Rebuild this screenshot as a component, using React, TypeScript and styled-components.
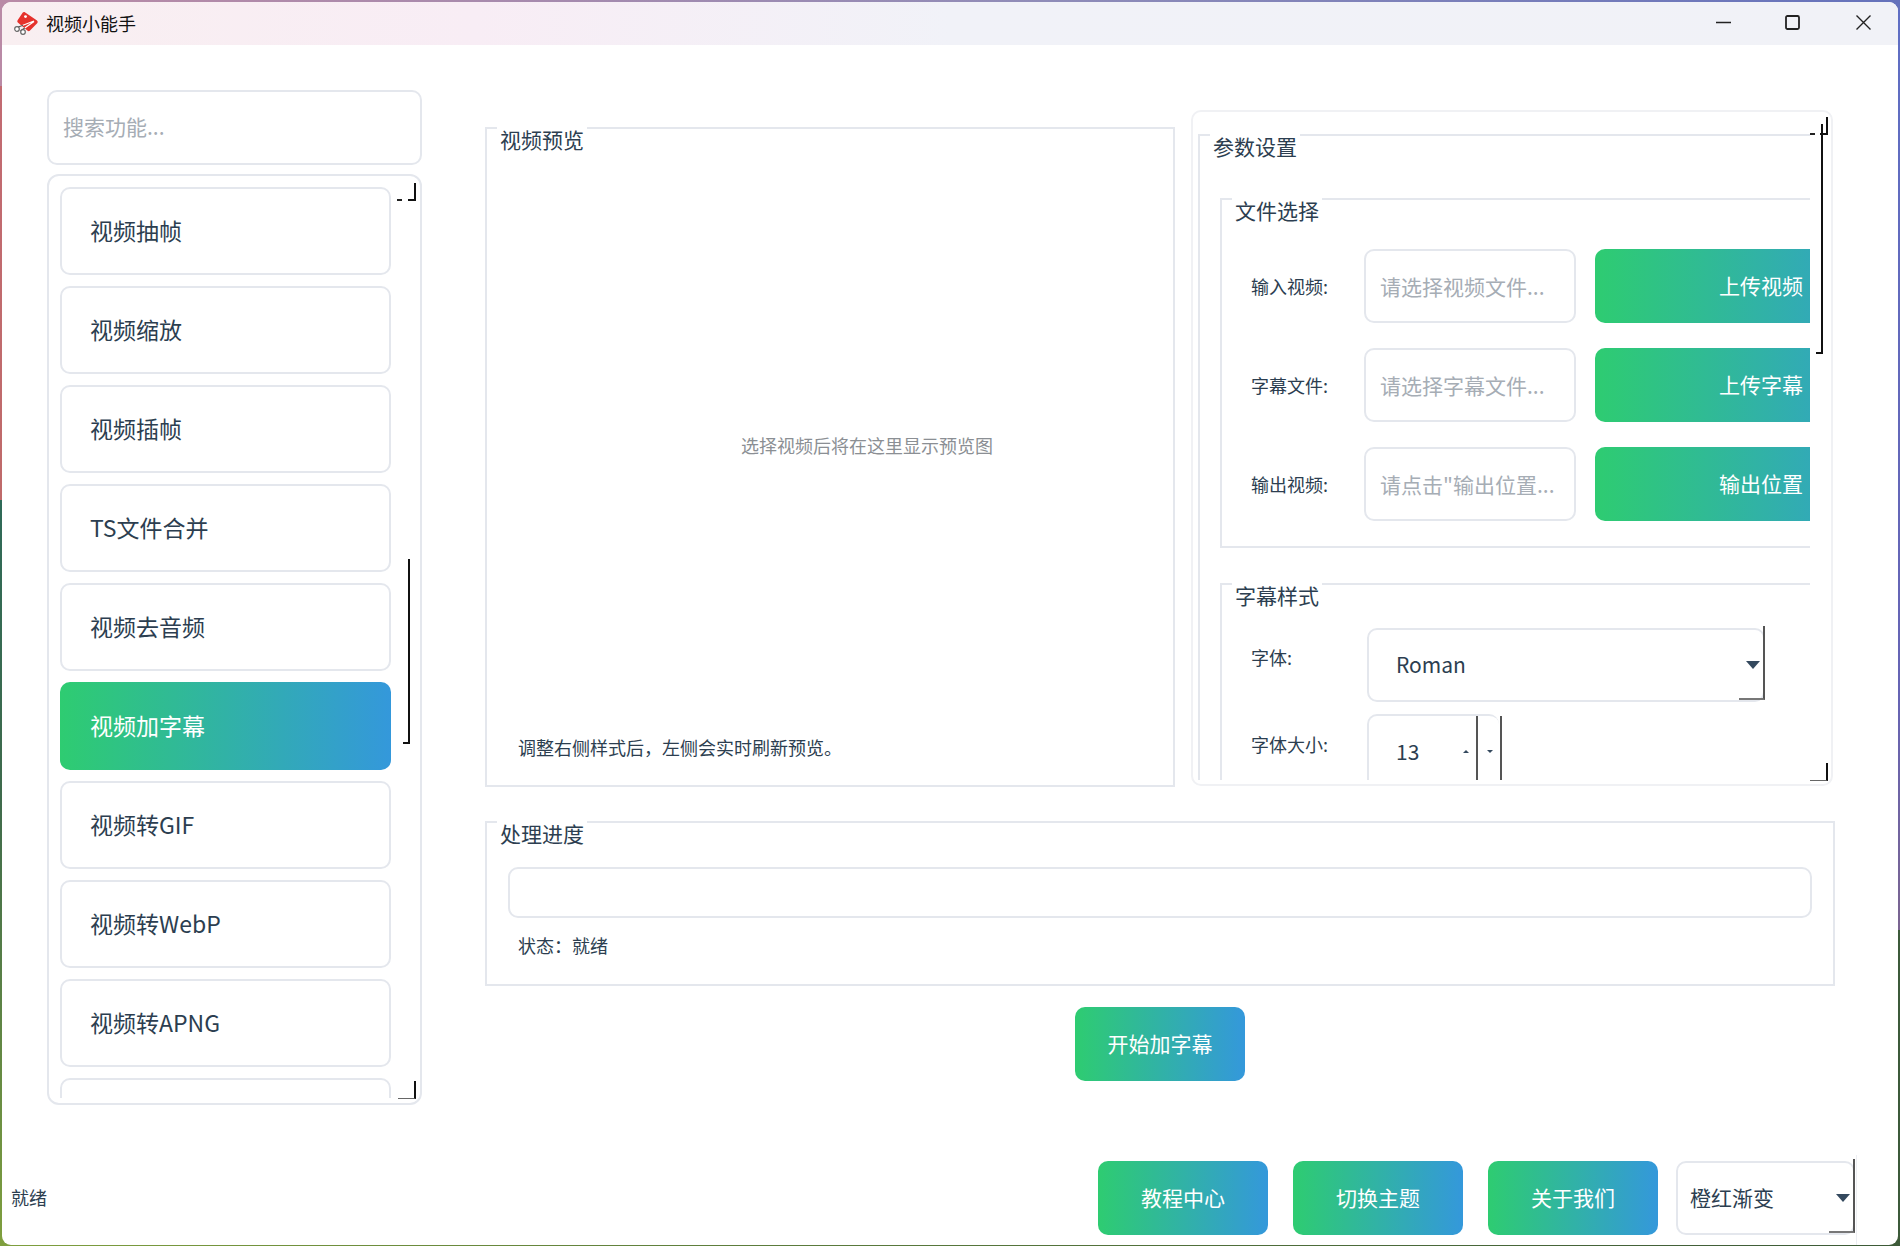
import React from 'react';
import styled, { createGlobalStyle, css } from 'styled-components';

const font = `"Noto Sans CJK SC", "Noto Sans", sans-serif`;
const gradient = 'linear-gradient(90deg, #2ecc71 0%, #3498db 100%)';
const line = '#e4e7ed';
const ink = '#2c3e50';

const GlobalStyle = createGlobalStyle`
  html, body {
    margin: 0;
    padding: 0;
    width: 1900px;
    height: 1246px;
    overflow: hidden;
    font-family: ${font};
  }
  * {
    box-sizing: border-box;
  }
`;

/* the desktop only shows as a thin rim round the window */
const Desktop = styled.div`
  width: 1900px;
  height: 1246px;
  padding: 2px 2px 1px 2px;
  background-color: #6a6ab0;
  background-image:
    linear-gradient(90deg, #b98aa6 0%, #a58aae 30%, #8f8cb8 55%, #6572bb 100%),
    linear-gradient(90deg, #7f9f3e 0%, #5c7c3c 40%, #3d5a38 100%),
    linear-gradient(180deg, #b98aa6 0, #b98aa6 86px, #c26b72 86px, #bf6a6a 500px, #2f6a58 500px, #3f6b4c 800px, #7f9f3e 100%),
    linear-gradient(180deg, #5f6fc4 0, #6664b4 700px, #7a6490 930px, #3c5a3a 930px, #3c5a3a 100%);
  background-repeat: no-repeat;
  background-size: 100% 10px, 100% 10px, 10px 100%, 10px 100%;
  background-position: top left, bottom left, top left, top right;
`;

const Window = styled.div`
  width: 1896px;
  height: 1243px;
  background: #fff;
  border-radius: 9px;
  overflow: hidden;
  display: flex;
  flex-direction: column;
`;

const TitleBar = styled.header`
  height: 43px;
  display: flex;
  align-items: center;
  padding: 0 27px 2px 11px;
  background: linear-gradient(90deg, #f9eff1 0%, #f8edf5 25%, #f1f2f8 50%, #f1f2f7 100%);
`;

const TitleText = styled.span`
  margin-left: 7px;
  font-size: 18px;
  color: #111;
  flex: 1;
`;

const WindowControls = styled.div`
  display: flex;
  align-items: center;
  gap: 54px;
  svg {
    display: block;
  }
  svg:last-child {
    margin-left: 2px;
  }
`;

const Content = styled.div`
  height: 1060px;
  display: flex;
  padding: 45px 0 0 45px;
`;

const Sidebar = styled.aside`
  width: 375px;
  display: flex;
  flex-direction: column;
  gap: 9px;
`;

const SearchInput = styled.input`
  flex: none;
  height: 75px;
  width: 100%;
  padding: 0 14px 4px;
  border: 2px solid ${line};
  border-radius: 10px;
  outline: none;
  background: #fff;
  font-family: ${font};
  font-size: 21px;
  color: ${ink};
  &::placeholder {
    color: #a6adb5;
    opacity: 1;
  }
`;

const ListFrame = styled.div`
  position: relative;
  height: 931px;
  border: 2px solid ${line};
  border-radius: 12px;
`;

const ListViewport = styled.div`
  width: 344px;
  height: 922px;
  padding: 11px 0 0 11px;
  overflow: hidden;
  display: flex;
  flex-direction: column;
  gap: 11px;
`;

const ListItem = styled.div<{ $active?: boolean }>`
  flex: none;
  width: 331px;
  height: 88px;
  display: flex;
  align-items: center;
  padding-left: 28px;
  padding-bottom: 2px;
  border: 2px solid ${line};
  border-radius: 10px;
  font-size: 23px;
  color: ${ink};
  ${p =>
    p.$active &&
    css`
      background: ${gradient} border-box;
      border-color: transparent;
      color: #fff;
    `}
`;

/* leftover scrollbar strokes, drawn as L pieces above the content */
const ScrollMark = styled.span<{ $x: number; $y: number; $w: number; $h: number; $light?: boolean }>`
  position: absolute;
  left: ${p => p.$x}px;
  top: ${p => p.$y}px;
  width: ${p => p.$w}px;
  height: ${p => p.$h}px;
  border-right: 2px solid #111;
  border-bottom: ${p => (p.$light ? '1px solid #666' : '2px solid #111')};
`;

const ScrollDash = styled.span<{ $x: number; $y: number }>`
  position: absolute;
  left: ${p => p.$x}px;
  top: ${p => p.$y}px;
  width: 5px;
  height: 2px;
  background: #222;
`;

const Main = styled.main`
  margin: 20px 0 0 63px;
  width: 1350px;
  display: flex;
  flex-direction: column;
`;

const TopRow = styled.div`
  display: flex;
  align-items: flex-start;
  gap: 16px;
  height: 676px;
`;

const GroupBox = styled.section`
  border: 2px solid ${line};
  display: flex;
  flex-direction: column;
`;

const GroupTitle = styled.div`
  align-self: flex-start;
  margin: -2px 0 0 10px;
  padding: 0 3px 3px;
  height: 28px;
  line-height: 25px;
  background: #fff;
  font-size: 21px;
  color: ${ink};
`;

const PreviewBox = styled(GroupBox)`
  flex: none;
  margin-top: 17px;
  width: 690px;
  height: 660px;
`;

const PreviewHint = styled.div`
  margin-top: 276px;
  padding-left: 74px;
  text-align: center;
  line-height: 28px;
  font-size: 18px;
  color: #8b8f94;
`;

const SmallNote = styled.div`
  margin-left: 31px;
  line-height: 28px;
  font-size: 18px;
  color: ${ink};
`;

const PreviewNote = styled(SmallNote)`
  margin-top: auto;
  padding-bottom: 24px;
`;

const ParamsFrame = styled.div`
  position: relative;
  flex: none;
  width: 642px;
  height: 676px;
  padding: 6px 21px 4px 5px;
  border: 2px solid #f0f1f4;
  border-radius: 10px;
`;

const ParamsViewport = styled.div`
  height: 662px;
  overflow: hidden;
`;

const ParamsBox = styled(GroupBox)`
  margin-top: 16px;
  width: 760px;
  height: 900px;
`;

const SubBox = styled(GroupBox)<{ $top: number; $height: number }>`
  flex: none;
  margin: ${p => p.$top}px 0 0 20px;
  width: 720px;
  height: ${p => p.$height}px;
`;

const FileRows = styled.div`
  margin-top: 23px;
  display: flex;
  flex-direction: column;
  gap: 25px;
`;

const FormRow = styled.div`
  display: flex;
  align-items: center;
  height: 74px;
  padding-left: 29px;
`;

const RowLabel = styled.label<{ $width: number; $lift?: number }>`
  flex: none;
  width: ${p => p.$width}px;
  padding-bottom: ${p => p.$lift ?? 0}px;
  font-size: 18px;
  color: ${ink};
`;

const PathInput = styled(SearchInput)`
  width: 212px;
  height: 74px;
  padding-bottom: 0;
`;

const GradientButton = styled.button`
  flex: none;
  width: 170px;
  height: 74px;
  border: none;
  border-radius: 10px;
  background: ${gradient};
  color: #fff;
  font-family: ${font};
  font-size: 21px;
  padding: 0 0 2px;
`;

const WideButton = styled(GradientButton)`
  margin-left: 19px;
  width: 332px;
`;

const StyleRows = styled.div`
  margin-top: 17px;
  display: flex;
  flex-direction: column;
  gap: 12px;
`;

const SelectBox = styled.div<{ $width: number; $pad: number }>`
  position: relative;
  flex: none;
  width: ${p => p.$width}px;
  height: 74px;
  display: flex;
  align-items: center;
  padding: 0 0 2px ${p => p.$pad}px;
  border: 2px solid ${line};
  border-radius: 10px;
  font-size: 21px;
  color: ${ink};
  &::before {
    content: '';
    position: absolute;
    right: 3px;
    top: 31px;
    border-left: 7px solid transparent;
    border-right: 7px solid transparent;
    border-top: 8px solid #34495e;
  }
  &::after {
    content: '';
    position: absolute;
    right: -2px;
    bottom: 0;
    width: 24px;
    height: 72px;
    border-right: 2px solid #555;
    border-bottom: 2px solid #777;
  }
`;

const SpinBox = styled.div`
  position: relative;
  flex: none;
  width: 132px;
  height: 74px;
  display: flex;
  align-items: center;
  padding: 0 0 2px 27px;
  border: 2px solid ${line};
  border-bottom: none;
  border-right: none;
  border-radius: 10px 10px 0 0;
  font-size: 21px;
  color: ${ink};
`;

const SpinLine = styled.span<{ $x: number }>`
  position: absolute;
  left: ${p => p.$x}px;
  top: 0;
  bottom: -2px;
  width: 2px;
  background: #555;
`;

const SpinArrow = styled.span<{ $x: number; $down?: boolean }>`
  position: absolute;
  left: ${p => p.$x}px;
  top: 34px;
  border-left: 3px solid transparent;
  border-right: 3px solid transparent;
  ${p => (p.$down ? 'border-top: 3px solid #34495e;' : 'border-bottom: 3px solid #34495e;')}
`;

const ProgressBox = styled(GroupBox)`
  margin-top: 35px;
  height: 165px;
`;

const ProgressTrack = styled.div`
  margin: 18px 0 0 21px;
  width: 1304px;
  height: 51px;
  border: 2px solid ${line};
  border-radius: 10px;
`;

const StatusNote = styled(SmallNote)`
  margin-top: 13px;
`;

const StartButton = styled(GradientButton)`
  margin-top: 21px;
  align-self: center;
`;

const Footer = styled.footer`
  margin-top: 56px;
  height: 74px;
  display: flex;
  align-items: center;
  padding: 0 43px 0 9px;
  gap: 25px;
`;

const ReadyText = styled.span`
  flex: 1;
  font-size: 18px;
  color: ${ink};
  padding-bottom: 3px;
`;

const ThemeSelect = styled(SelectBox)`
  margin-left: -7px;
`;

const FooterRule = styled.span`
  position: absolute;
  right: -4px;
  top: -8px;
  width: 1px;
  height: 90px;
  background: #eceef2;
`;

const AppIcon = () => (
  <svg width="26" height="24" viewBox="0 0 26 24">
    <path d="M11.5 1 L24 9.5 Q25.3 10.6 24.4 12 L17 19.5 Q16 20.6 14.6 19.8 L4.8 11.5 Q3.8 10.4 4.6 9.2 L9.6 1.8 Q10.4 0.6 11.5 1 Z" fill="#e5322d" />
    <circle cx="12.5" cy="5.6" r="1.4" fill="#fff" />
    <path d="M4 16.5 L21 10 M7.5 20 L21 10.5" stroke="#fff" strokeWidth="1.3" />
    <path d="M4 16.5 L10 14.2 M7.5 20 L12 16.8" stroke="#555" strokeWidth="1.1" />
    <circle cx="4" cy="18" r="2.3" fill="#fff" stroke="#666" strokeWidth="1.2" />
    <circle cx="10" cy="21" r="2.3" fill="#fff" stroke="#666" strokeWidth="1.2" />
  </svg>
);

const MinimizeIcon = () => (
  <svg width="15" height="15" viewBox="0 0 15 15">
    <path d="M0 7.5 H15" stroke="#222" strokeWidth="1.4" />
  </svg>
);

const MaximizeIcon = () => (
  <svg width="15" height="15" viewBox="0 0 15 15">
    <rect x="1" y="1" width="13" height="13" rx="1.5" fill="none" stroke="#222" strokeWidth="1.8" />
  </svg>
);

const CloseIcon = () => (
  <svg width="15" height="15" viewBox="0 0 15 15">
    <path d="M0.5 0.5 L14.5 14.5 M14.5 0.5 L0.5 14.5" stroke="#222" strokeWidth="1.4" />
  </svg>
);

const features = ['视频抽帧', '视频缩放', '视频插帧', 'TS文件合并', '视频去音频', '视频加字幕', '视频转GIF', '视频转WebP', '视频转APNG', ''];

const fileRows = [
  { label: '输入视频:', placeholder: '请选择视频文件...', action: '上传视频' },
  { label: '字幕文件:', placeholder: '请选择字幕文件...', action: '上传字幕' },
  { label: '输出视频:', placeholder: '请点击"输出位置...', action: '输出位置' },
];

const App = () => {
  return (
    <Desktop>
      <GlobalStyle />
      <Window>
        <TitleBar>
          <AppIcon />
          <TitleText>视频小能手</TitleText>
          <WindowControls>
            <MinimizeIcon />
            <MaximizeIcon />
            <CloseIcon />
          </WindowControls>
        </TitleBar>

        <Content>
          <Sidebar>
            <SearchInput placeholder="搜索功能..." readOnly />
            <ListFrame>
              <ListViewport>
                {features.map((name, i) => (
                  <ListItem key={i} $active={name === '视频加字幕'}>
                    {name}
                  </ListItem>
                ))}
              </ListViewport>
              <ScrollDash $x={348} $y={23} />
              <ScrollMark $x={359} $y={7} $w={8} $h={18} />
              <ScrollMark $x={354} $y={383} $w={7} $h={185} />
              <ScrollMark $x={349} $y={905} $w={18} $h={18} $light />
            </ListFrame>
          </Sidebar>

          <Main>
            <TopRow>
              <PreviewBox>
                <GroupTitle>视频预览</GroupTitle>
                <PreviewHint>选择视频后将在这里显示预览图</PreviewHint>
                <PreviewNote>调整右侧样式后，左侧会实时刷新预览。</PreviewNote>
              </PreviewBox>

              <ParamsFrame>
                <ParamsViewport>
                  <ParamsBox>
                    <GroupTitle>参数设置</GroupTitle>
                    <SubBox $top={36} $height={350}>
                      <GroupTitle>文件选择</GroupTitle>
                      <FileRows>
                        {fileRows.map(row => (
                          <FormRow key={row.action}>
                            <RowLabel $width={113}>{row.label}</RowLabel>
                            <PathInput placeholder={row.placeholder} readOnly />
                            <WideButton>{row.action}</WideButton>
                          </FormRow>
                        ))}
                      </FileRows>
                    </SubBox>
                    <SubBox $top={35} $height={300}>
                      <GroupTitle>字幕样式</GroupTitle>
                      <StyleRows>
                        <FormRow>
                          <RowLabel $width={116} $lift={16}>字体:</RowLabel>
                          <SelectBox $width={398} $pad={27}>Roman</SelectBox>
                        </FormRow>
                        <FormRow>
                          <RowLabel $width={116} $lift={14}>字体大小:</RowLabel>
                          <SpinBox>
                            13
                            <SpinLine $x={107} />
                            <SpinLine $x={131} />
                            <SpinArrow $x={94} />
                            <SpinArrow $x={118} $down />
                          </SpinBox>
                        </FormRow>
                      </StyleRows>
                    </SubBox>
                  </ParamsBox>
                </ParamsViewport>
                <ScrollDash $x={617} $y={21} />
                <ScrollMark $x={627} $y={5} $w={8} $h={18} />
                <ScrollMark $x={623} $y={12} $w={7} $h={230} />
                <ScrollMark $x={617} $y={651} $w={18} $h={18} $light />
              </ParamsFrame>
            </TopRow>

            <ProgressBox>
              <GroupTitle>处理进度</GroupTitle>
              <ProgressTrack />
              <StatusNote>状态：就绪</StatusNote>
            </ProgressBox>

            <StartButton>开始加字幕</StartButton>
          </Main>
        </Content>

        <Footer>
          <ReadyText>就绪</ReadyText>
          <GradientButton>教程中心</GradientButton>
          <GradientButton>切换主题</GradientButton>
          <GradientButton>关于我们</GradientButton>
          <ThemeSelect $width={179} $pad={12}>
            橙红渐变
            <FooterRule />
          </ThemeSelect>
        </Footer>
      </Window>
    </Desktop>
  );
};

export default App;
